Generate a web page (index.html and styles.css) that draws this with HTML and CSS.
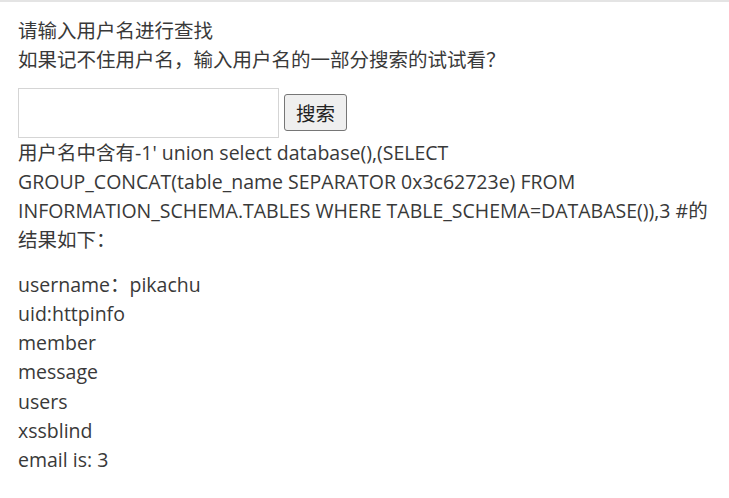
FILE: index.html
```html
<!DOCTYPE html>
<html lang="zh-CN">
<head>
 <meta charset="UTF-8">
 <title>sqli search</title>
 <link rel="stylesheet" href="styles.css">
</head>
<body>
 <div class="page-content">
  <div class="search-form">
   <p class="notice">请输入用户名进行查找<br>如果记不住用户名，输入用户名的一部分搜索的试试看？</p>
   <form class="search-row" method="get">
    <input class="search-input" type="text" name="name">
    <input class="search-submit" type="submit" name="submit" value="搜索">
   </form>
   <p class="query-info">用户名中含有-1' union select database(),(SELECT GROUP_CONCAT(table_name SEPARATOR 0x3c62723e) FROM INFORMATION_SCHEMA.TABLES WHERE TABLE_SCHEMA=DATABASE()),3 #的结果如下：</p>
   <p class="result">username：pikachu<br>uid:httpinfo<br>member<br>message<br>users<br>xssblind<br>email is: 3</p>
  </div>
 </div>
</body>
</html>
```

FILE: styles.css
```css
html,
body {
 margin: 0;
 padding: 0;
}

body {
 font-family: "Open Sans", "Noto Sans CJK SC", sans-serif;
 font-size: 19.5px;
 line-height: 1.5;
 color: #393939;
 background-color: #ffffff;
}

.page-content {
 border-top: 2px solid #e4e4e4;
 padding: 14px 18px 0;
}

.notice {
 margin: 0;
}

.search-row {
 display: flex;
 align-items: center;
 gap: 5px;
 margin: 13px 0 0;
}

.search-input {
 width: 261px;
 height: 50px;
 box-sizing: border-box;
 border: 1px solid #d5d5d5;
 padding: 5px 4px;
 font: inherit;
 margin: 0;
}

.search-submit {
 height: 37px;
 padding: 0 11px;
 margin: 0;
 font-family: "Open Sans", "Noto Sans CJK SC", sans-serif;
 font-size: 19.5px;
 color: #222222;
 background-color: #efefef;
 border: 1px solid #767676;
 border-radius: 3px;
}

.query-info {
 margin: 0;
}

.result {
 margin: 15px 0 0;
}
```
